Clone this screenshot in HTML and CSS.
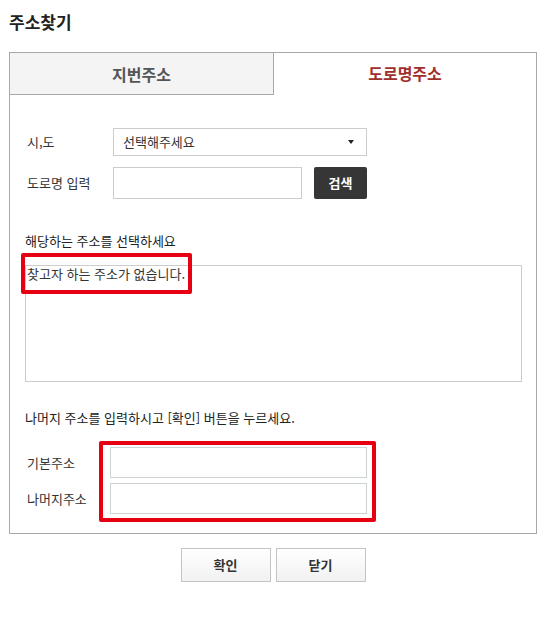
FILE: index.html
```html
<!DOCTYPE html>
<html lang="ko">
<head>
<meta charset="utf-8">
<title>주소찾기</title>
<link rel="stylesheet" href="styles.css">
</head>
<body>
<h1 class="title">주소찾기</h1>
<div class="panel">
  <div class="tabs">
    <div class="tab">지번주소</div>
    <div class="tab tab-active">도로명주소</div>
  </div>
  <div class="panel-body">
    <div class="form-row">
      <span class="label">시,도</span>
      <div class="select"><span>선택해주세요</span><span class="caret"></span></div>
    </div>
    <div class="form-row form-row-road">
      <span class="label">도로명 입력</span>
      <input class="field road" type="text">
      <button class="search" type="button">검색</button>
    </div>
    <p class="section-title">해당하는 주소를 선택하세요</p>
    <div class="result-wrap">
      <div class="result">찾고자 하는 주소가 없습니다.</div>
      <span class="mark mark-result"></span>
    </div>
    <p class="section-title note">나머지 주소를 입력하시고 [확인] 버튼을 누르세요.</p>
    <div class="addr">
      <div class="addr-labels">
        <span class="addr-label">기본주소</span>
        <span class="addr-label">나머지주소</span>
      </div>
      <div class="addr-fields">
        <input class="field addr-input" type="text">
        <input class="field addr-input" type="text">
        <span class="mark mark-addr"></span>
      </div>
    </div>
  </div>
</div>
<div class="actions">
  <button class="btn" type="button">확인</button>
  <button class="btn" type="button">닫기</button>
</div>
</body>
</html>
```

FILE: styles.css
```css
* { box-sizing: border-box; }
body {
  margin: 0;
  padding: 13px 0 0 9px;
  background: #fff;
  color: #333;
  font-family: "Noto Sans CJK KR", "Noto Sans", sans-serif;
  font-size: 13px;
  line-height: 16px;
}
.title {
  margin: 0 0 21px;
  font-size: 17px;
  line-height: 18px;
  font-weight: bold;
  color: #222;
}
.panel {
  width: 528px;
  height: 482px;
  border: 1px solid #a8a8a8;
}
.tabs {
  display: flex;
  height: 42px;
}
.tab {
  flex: 1;
  display: flex;
  align-items: center;
  justify-content: center;
  font-size: 16px;
  font-weight: bold;
}
.tab:first-child {
  flex: 0 0 264px;
  background: #f4f4f4;
  color: #555;
  border-right: 1px solid #a8a8a8;
  border-bottom: 1px solid #a8a8a8;
}
.tab-active {
  color: #a0302b;
  padding-bottom: 2px;
}
.panel-body {
  padding: 33px 14px 0 15px;
}
.form-row {
  display: flex;
  align-items: center;
  padding-left: 2px;
  height: 28px;
}
.form-row-road {
  margin-top: 11px;
  height: 32px;
}
.label {
  width: 86px;
  flex: 0 0 86px;
  color: #333;
}
.select {
  width: 254px;
  height: 28px;
  border: 1px solid #ccc;
  display: flex;
  align-items: center;
  justify-content: space-between;
  padding: 0 12px 0 9px;
  color: #333;
}
.caret {
  width: 0;
  height: 0;
  border-left: 3.5px solid transparent;
  border-right: 3.5px solid transparent;
  border-top: 4px solid #222;
}
.field {
  border: 1px solid #ccc;
  background: #fff;
  font: inherit;
  margin: 0;
  padding: 0 6px;
  outline: none;
}
.road {
  width: 189px;
  height: 32px;
}
.search {
  margin-left: 12px;
  width: 53px;
  height: 32px;
  border: 0;
  border-radius: 2px;
  background: #363636;
  color: #fff;
  font: inherit;
  font-size: 13px;
  font-weight: bold;
  padding: 0;
}
.section-title {
  margin: 34px 0 0;
  line-height: 16px;
  color: #222;
}
.result-wrap {
  position: relative;
  margin-top: 16px;
}
.result {
  height: 117px;
  border: 1px solid #ccc;
  padding: 0 1px;
  line-height: 16px;
  color: #333;
}
.mark {
  position: absolute;
  border: 4px solid #e60012;
  border-radius: 2px;
  pointer-events: none;
}
.mark-result {
  left: -4px;
  top: -12px;
  width: 171px;
  height: 41px;
}
.note {
  margin-top: 28px;
}
.addr {
  display: flex;
  margin-top: 21px;
  padding-left: 2px;
}
.addr-labels {
  flex: 0 0 83px;
  display: flex;
  flex-direction: column;
  gap: 5px;
}
.addr-label {
  height: 31px;
  display: flex;
  align-items: center;
}
.addr-fields {
  position: relative;
  display: flex;
  flex-direction: column;
  gap: 5px;
  width: 257px;
}
.addr-input {
  width: 257px;
  height: 31px;
  border-color: #cdd3d3;
}
.mark-addr {
  left: -11px;
  top: -6px;
  right: -9px;
  bottom: -8px;
}
.actions {
  width: 528px;
  display: flex;
  justify-content: center;
  gap: 5px;
  margin-top: 14px;
}
.btn {
  width: 90px;
  height: 34px;
  border: 1px solid #c4c4c4;
  background: linear-gradient(#ffffff, #f1f1f1);
  color: #333;
  font: inherit;
  font-weight: bold;
  padding: 0;
}
```
